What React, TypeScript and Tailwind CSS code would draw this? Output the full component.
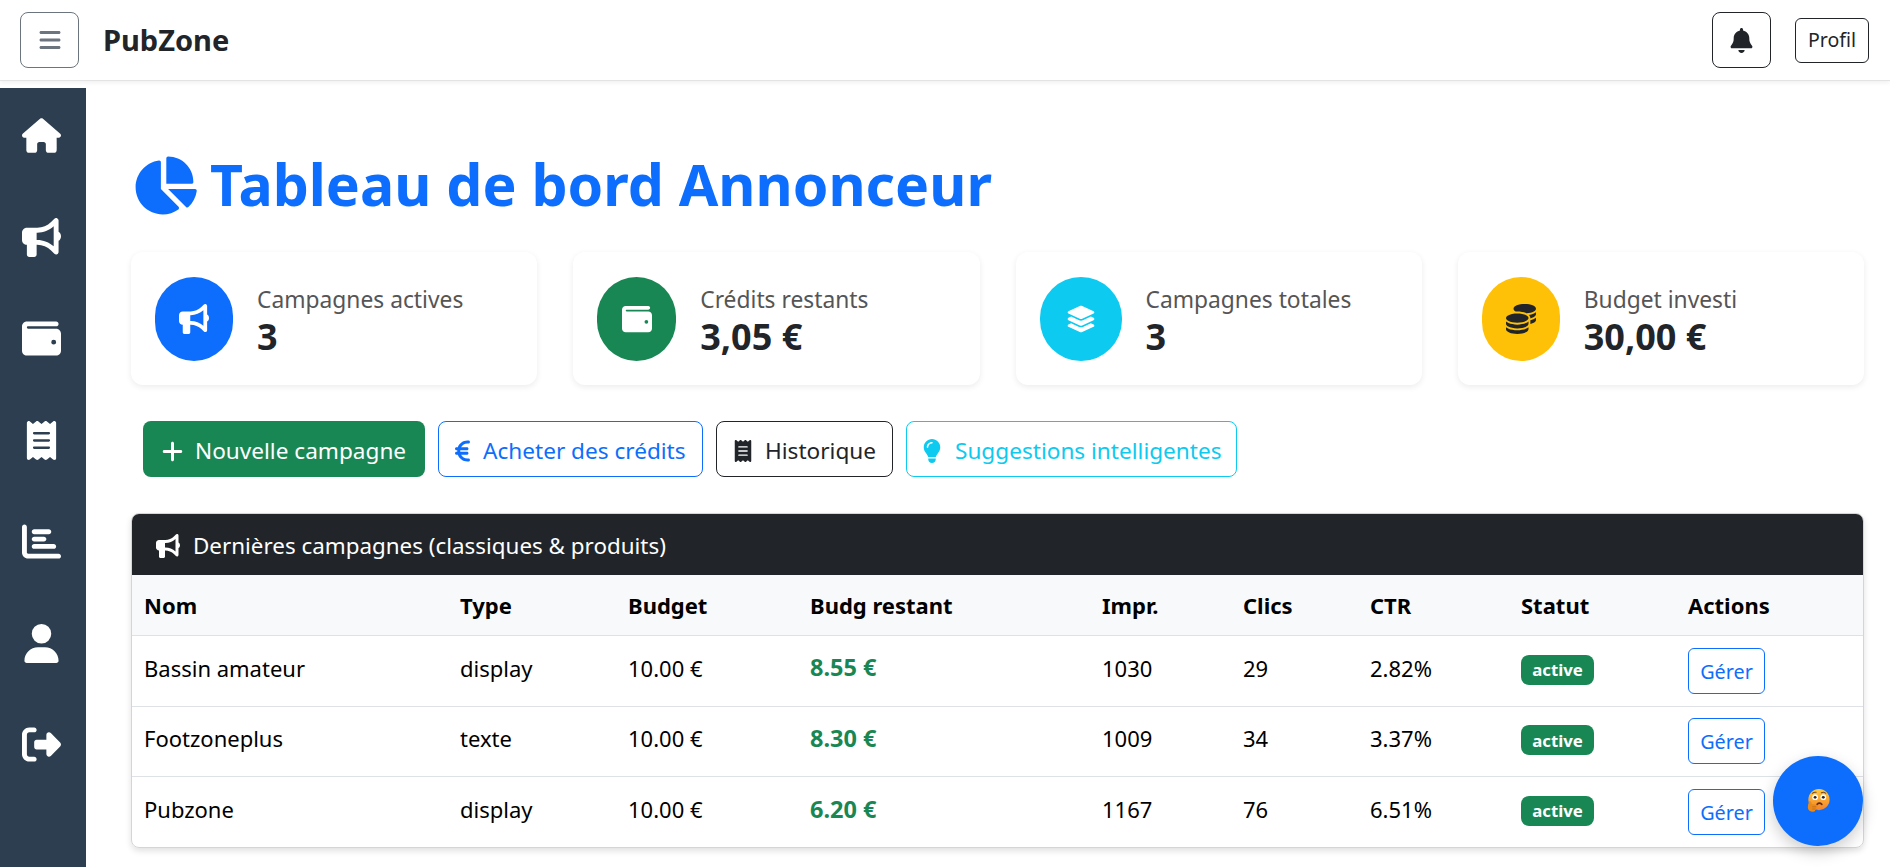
import {
  FaBell,
  FaBars,
  FaBullhorn,
  FaChartBar,
  FaChartPie,
  FaCoins,
  FaEuroSign,
  FaHouse,
  FaLayerGroup,
  FaLightbulb,
  FaPlus,
  FaReceipt,
  FaRightFromBracket,
  FaUser,
  FaWallet,
} from "react-icons/fa6";

const sideIcons = [FaHouse, FaBullhorn, FaWallet, FaReceipt, FaChartBar, FaUser, FaRightFromBracket];

const stats = [
  { icon: FaBullhorn, label: "Campagnes actives", value: "3", circle: "w-[78px] bg-[#0d6efd] text-white" },
  { icon: FaWallet, label: "Crédits restants", value: "3,05 €", circle: "w-[79px] bg-[#198754] text-white" },
  { icon: FaLayerGroup, label: "Campagnes totales", value: "3", circle: "w-[82px] bg-[#0dcaf0] text-white" },
  { icon: FaCoins, label: "Budget investi", value: "30,00 €", circle: "w-[78px] bg-[#ffc107] text-[#212529]" },
];

const rows = [
  { name: "Bassin amateur", type: "display", left: "8.55 €", impr: "1030", clics: "29", ctr: "2.82%", h: "h-[71px]" },
  { name: "Footzoneplus", type: "texte", left: "8.30 €", impr: "1009", clics: "34", ctr: "3.37%", h: "h-[70px]" },
  { name: "Pubzone", type: "display", left: "6.20 €", impr: "1167", clics: "76", ctr: "6.51%", h: "h-[71px]" },
];

const heads = [
  ["Nom", "w-[316px]"],
  ["Type", "w-[168px]"],
  ["Budget", "w-[182px]"],
  ["Budg restant", "w-[292px]"],
  ["Impr.", "w-[141px]"],
  ["Clics", "w-[127px]"],
  ["CTR", "w-[151px]"],
  ["Statut", "w-[167px]"],
  ["Actions", ""],
];

function ThinkingEmoji() {
  return (
    <svg viewBox="0 0 24 28" className="h-[27px] w-[24px]">
      <defs>
        <linearGradient id="face" x1="0" y1="0" x2="0" y2="1">
          <stop offset="0%" stopColor="#ffcb3d" />
          <stop offset="100%" stopColor="#f6822a" />
        </linearGradient>
      </defs>
      <circle cx="13" cy="12" r="11" fill="url(#face)" />
      <circle cx="9" cy="9.5" r="3" fill="#fff" />
      <circle cx="17.5" cy="9.5" r="3" fill="#fff" />
      <circle cx="9" cy="9.7" r="1.5" fill="#2b2320" />
      <circle cx="17.5" cy="9.7" r="1.5" fill="#2b2320" />
      <path d="M6 5.5q2-1.5 4-1M15.5 5q2.500-1.500 4.500.5" fill="none" stroke="#7a4a1e" strokeWidth="1.100" strokeLinecap="round" />
      <path d="M11 17q2.500-2.500 5 0" fill="none" stroke="#5a2d1a" strokeWidth="1.600" strokeLinecap="round" />
      <path d="M3 13.500q1.500-.5 2 1.500l.5 1.500 6 1q1.200.7.200 1.700l-1.200.3q.8 1-.4 1.700q.4 1.200-.8 1.600q-.2 1.700-2.300 1.700q-4.500.2-5.500-3.500q-.5-3 1.500-7.500z" fill="#e98a1c" />
      <path d="M6 19.500h4M6 21.800h3.500" stroke="#b9600f" strokeWidth=".6" />
    </svg>
  );
}

export default function App() {
  const cell = "pl-3 pb-[5px]";
  return (
    <div className="h-screen overflow-hidden bg-white font-['Noto_Sans','Open_Sans',sans-serif] text-[#212529]">
      {/* navbar */}
      <header className="flex h-[81px] items-center justify-between border-b border-[#e3e3e3] bg-white pl-5 pr-[21px] shadow-[0_2px_4px_rgba(0,0,0,0.06)]">
        <div className="flex items-center gap-6">
          <button className="flex h-[56px] w-[59px] items-center justify-center rounded-lg border border-[#6c757d] text-[#6c757d]">
            <FaBars className="h-[24px] w-auto" />
          </button>
          <span className="text-[29px] font-bold">PubZone</span>
        </div>
        <div className="flex items-center gap-6">
          <button className="flex h-[56px] w-[59px] items-center justify-center rounded-lg border border-[#212529]">
            <FaBell className="h-[25px] w-auto" />
          </button>
          <button className="flex h-[45px] w-[74px] items-center justify-center rounded-md border border-[#212529] text-[19.5px]">
            Profil
          </button>
        </div>
      </header>

      <div className="mt-[7px] flex h-[779px]">
        {/* sidebar */}
        <aside className="flex w-[86px] shrink-0 flex-col items-center gap-[62.5px] bg-[#2c3e50] pr-1 pt-[28px] text-white">
          {sideIcons.map((Icon, i) => (
            <Icon key={i} className="h-[39px] w-auto shrink-0" />
          ))}
        </aside>

        {/* main */}
        <main className="min-w-0 flex-1 pl-[45px] pr-[26px]">
          <h1 className="mt-[66px] flex h-[62px] items-center gap-[13px] whitespace-nowrap pl-[1px] text-[57.200px] font-bold text-[#0d6efd]">
            <FaChartPie className="h-[65px] w-auto shrink-0" />
            Tableau de bord Annonceur
          </h1>

          <div className="mt-[36px] grid grid-cols-4 gap-[36px]">
            {stats.map((s) => (
              <div key={s.label} className="flex h-[133px] items-center gap-6 rounded-xl bg-white px-6 shadow-[0_2px_6px_rgba(0,0,0,0.08)]">
                <div className={`flex h-[84px] shrink-0 items-center justify-center rounded-full ${s.circle}`}>
                  <s.icon className="h-[30px] w-auto" />
                </div>
                <div className="pt-[5px]">
                  <div className="text-[22.800px] leading-[31px] text-[#555]">{s.label}</div>
                  <div className="text-[36px] font-bold leading-[44px]">{s.value}</div>
                </div>
              </div>
            ))}
          </div>

          <div className="mt-9 flex gap-[13px] pl-3 text-[22.600px]">
            <button className="flex h-[56px] w-[282px] items-center gap-[12px] whitespace-nowrap rounded-lg bg-[#198754] pl-[19px] pt-1 text-white">
              <FaPlus className="h-[25px] w-[21px] shrink-0" /> Nouvelle campagne
            </button>
            <button className="flex h-[56px] w-[265px] items-center gap-[13px] whitespace-nowrap rounded-lg border border-[#0d6efd] pl-[16px] pt-1 text-[#0d6efd]">
              <FaEuroSign className="h-[24px] w-[15px] shrink-0" /> Acheter des crédits
            </button>
            <button className="flex h-[56px] w-[177px] items-center gap-[11px] whitespace-nowrap rounded-lg border border-[#212529] pl-[15px] pt-1">
              <FaReceipt className="h-[22px] w-auto shrink-0" /> Historique
            </button>
            <button className="flex h-[56px] w-[331px] items-center gap-[11px] whitespace-nowrap rounded-lg border border-[#0dcaf0] pl-[13px] pt-1 text-[#0dcaf0]">
              <FaLightbulb className="h-[24px] w-auto shrink-0" /> Suggestions intelligentes
            </button>
          </div>

          <section className="mt-9 overflow-hidden rounded-lg border border-[#d5d5d5] shadow-[0_3px_6px_rgba(0,0,0,0.12)]">
            <div className="flex h-[61px] items-center gap-[13px] bg-[#212529] px-6 pt-[3px] text-[22.400px] text-white">
              <FaBullhorn className="h-[24px] w-auto" />
              Dernières campagnes (classiques &amp; produits)
            </div>
            <table className="w-full table-fixed border-collapse text-left text-[22px] text-black">
              <thead>
                <tr className="h-[60px] border-b border-[#dee2e6] bg-[#f8f9fa]">
                  {heads.map(([label, w]) => (
                    <th key={label} className={`pl-3 pt-[2px] font-bold ${w}`}>{label}</th>
                  ))}
                </tr>
              </thead>
              <tbody>
                {rows.map((r, i) => (
                  <tr key={r.name} className={`${r.h} ${i < 2 ? "border-b border-[#dee2e6]" : ""}`}>
                    <td className={cell}>{r.name}</td>
                    <td className={cell}>{r.type}</td>
                    <td className={cell}>10.00 €</td>
                    <td className={`${cell} text-[23.500px] font-bold text-[#198754]`}>{r.left}</td>
                    <td className={cell}>{r.impr}</td>
                    <td className={cell}>{r.clics}</td>
                    <td className={cell}>{r.ctr}</td>
                    <td className={cell}>
                      <span className="inline-flex h-[30px] w-[73px] items-center justify-center rounded-lg bg-[#198754] text-[16.800px] font-bold text-white">active</span>
                    </td>
                    <td className="pl-3">
                      <button className="h-[46px] w-[77px] rounded-md border border-[#0d6efd] pt-[2px] text-[19.800px] text-[#0d6efd]">Gérer</button>
                    </td>
                  </tr>
                ))}
              </tbody>
            </table>
          </section>
        </main>
      </div>

      {/* bouton flottant */}
      <button className="fixed left-[1773px] top-[756px] flex h-[90px] w-[90px] items-center justify-center rounded-full bg-[#0d6efd] shadow-[0_6px_16px_rgba(0,0,0,0.2)]">
        <ThinkingEmoji />
      </button>
    </div>
  );
}
